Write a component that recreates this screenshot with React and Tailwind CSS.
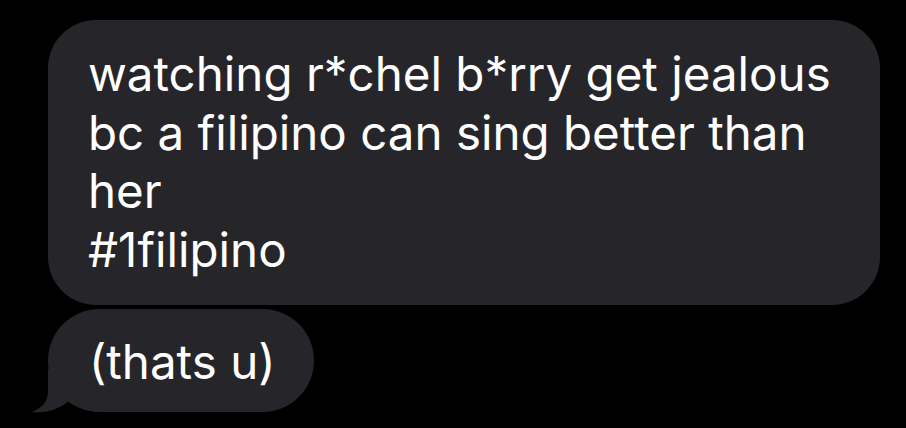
export default function App() {
  const font = { fontFamily: 'Inter, "Noto Sans", sans-serif' };
  return (
    <div className="w-[906px] h-[428px] bg-black overflow-hidden">
      <div className="flex flex-col items-start gap-[4px] pl-[48px] pt-[20px]">
        <div
          className="w-[832px] h-[285px] bg-[#262529] rounded-[48px] pl-[40px] pt-[25px] text-white text-[47.5px] leading-[58.7px]"
          style={font}
        >
          <div className="whitespace-nowrap">watching r*chel b*rry get jealous</div>
          <div className="whitespace-nowrap">bc a filipino can sing better than</div>
          <div className="whitespace-nowrap">her</div>
          <div className="whitespace-nowrap">#1filipino</div>
        </div>
        <div className="relative">
          <svg
            className="absolute left-[-16px] top-[60px]"
            width="60"
            height="44"
            viewBox="0 0 60 44"
          >
            <path
              d="M16 0 L16 22 Q16 37 0 43 Q20 45 36 33 L36 0 Z"
              fill="#262529"
            />
          </svg>
          <div
            className="relative h-[103px] bg-[#262529] rounded-[52px] pl-[41px] pr-[38px] pt-[24px] text-white text-[47.5px] leading-[58.7px] whitespace-nowrap"
            style={font}
          >
            (thats u)
          </div>
        </div>
      </div>
    </div>
  );
}
